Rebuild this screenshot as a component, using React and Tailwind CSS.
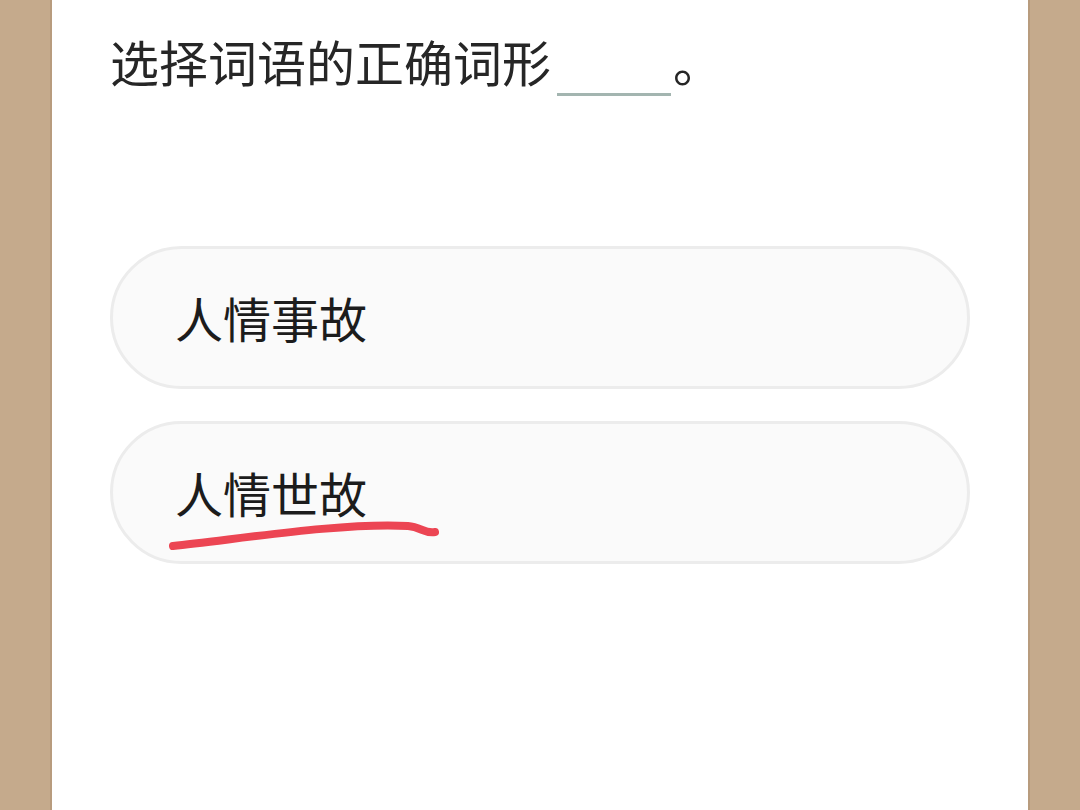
import React from 'react';

const options = ['人情事故', '人情世故'];

export default function App() {
  return (
    <div
      className="flex w-[1080px] h-[810px] bg-[#c5aa8c] overflow-hidden"
      style={{ fontFamily: '"Noto Sans CJK SC", "Noto Sans", sans-serif' }}
    >
      <div className="w-[52px] shrink-0 border-r-2 border-[#b89c7e]" />
      <div className="flex-1 bg-white px-[58px] pt-[33px]">
        {/* question */}
        <div className="flex items-end text-[49px] leading-[56px] text-[#262626]">
          <span>选择词语的正确词形</span>
          <span className="w-[114px] h-[3px] bg-[#a3b5b0] mb-[-7px] ml-[6px]" />
          <span className="ml-[2px]">。</span>
        </div>

        {/* options */}
        <div className="flex flex-col gap-[32px] mt-[157px]">
          {options.map((o, i) => (
            <div
              key={o}
              className="relative h-[143px] rounded-full border-[3px] border-[#ececec] bg-[#fafafa] flex items-center pl-[62px] text-[48px] text-[#1c1c1c]"
            >
              <span className="mt-[-2px]">{o}</span>
              {i === 1 && (
                <svg
                  className="absolute left-[50px] top-[90px]"
                  width="280"
                  height="40"
                  viewBox="0 0 280 40"
                  fill="none"
                >
                  <path
                    d="M10 32 C 70 26, 180 8, 245 12 C 258 13, 262 20, 272 18"
                    stroke="#ec4553"
                    strokeWidth="8"
                    strokeLinecap="round"
                  />
                </svg>
              )}
            </div>
          ))}
        </div>
      </div>
      <div className="w-[52px] shrink-0 border-l-2 border-[#b89c7e]" />
    </div>
  );
}
